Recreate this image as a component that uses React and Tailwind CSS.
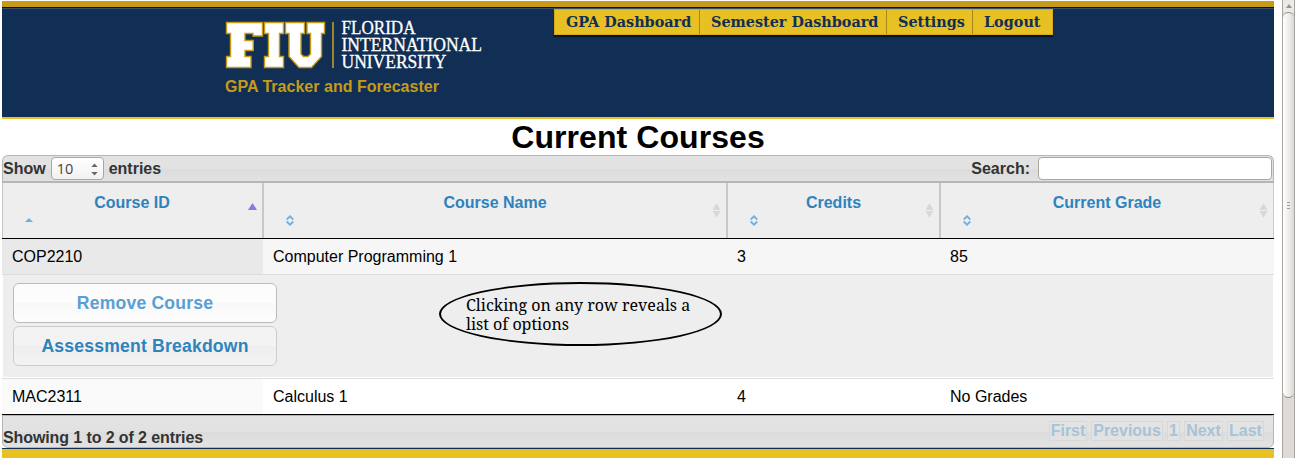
import React from 'react';

function Logo() {
  return (
    <svg className="block h-[50px] w-[262px] overflow-visible" viewBox="0 0 262 50">
      <g fill="#fff" stroke="#c79b18" strokeWidth="1.4">
        <path d="M1.500 1.500H37.500V15H28V12.500H20V19.500H28.200V29.500H20V35.500H26V46.500H1.500V35.500H5.500V12.500H1.500Z" />
        <path d="M39.500 1.500H58.500V12.500H54.500V35.500H58.500V46.500H39.500V35.500H43.500V12.500H39.500Z" />
        <path d="M60.500 1.500H79.500V12.500H76V33L78.500 35.500H83L85.500 33V12.500H82V1.500H99.500V12.500H96.500V35.500L86.500 46.500H74L64 35.500V12.500H60.500Z" />
      </g>
      <path d="M108 1V47" stroke="#c79b18" strokeWidth="1.6" />
      <g fill="#fff" stroke="#fff" strokeWidth="0.300" fontFamily="Liberation Serif, serif" fontSize="18">
        <text x="116.500" y="13" textLength="74" lengthAdjust="spacingAndGlyphs">FLORIDA</text>
        <text x="116.500" y="30" textLength="140.500" lengthAdjust="spacingAndGlyphs">INTERNATIONAL</text>
        <text x="116.500" y="47" textLength="105" lengthAdjust="spacingAndGlyphs">UNIVERSITY</text>
      </g>
    </svg>
  );
}

const navItems = [
  { label: 'GPA Dashboard', width: 'w-[145px]' },
  { label: 'Semester Dashboard', width: 'w-[187px]' },
  { label: 'Settings', width: 'w-[86px]' },
  { label: 'Logout', width: 'w-[81px]' },
];

function Nav() {
  return (
    <nav className="flex h-[26px] w-[499px] border border-[#d9a91c] bg-[#e7c024] font-['DejaVu_Serif',serif] text-[14.4px] leading-[24px] font-bold text-[#112e54] shadow-[0_2px_1px_#07152a]">
      {navItems.map((n, i) => (
        <a key={n.label} className={`${n.width} shrink-0 pl-[11px] whitespace-nowrap ${i < 3 ? 'border-r border-[#a88718]' : ''}`}>
          {n.label}
        </a>
      ))}
    </nav>
  );
}

function SortArrows() {
  return (
    <svg className="block h-[15px] w-[9px]" viewBox="0 0 9 15">
      <path d="M.5 7L4.500 0L8.500 7ZM.5 8L4.500 15L8.500 8Z" fill="#d8d8d8" />
    </svg>
  );
}

function Carets() {
  return (
    <svg className="block h-[11px] w-[8px]" viewBox="0 0 8 11">
      <path d="M.7 4.500L4 1.300L7.300 4.500M.7 6.500L4 9.700L7.300 6.500" fill="none" stroke="#6db1e2" strokeWidth="1.800" />
    </svg>
  );
}

function HeaderCell({ label, sorted, last }) {
  return (
    <div className={`flex h-[55px] justify-between bg-[#eee] ${last ? 'border-r border-[#ccc]' : 'border-r-2 border-[#c8c8c8]'} ${sorted ? 'border-l' : ''}`}>
      <div className={`${sorted ? 'w-[30px] pl-[22px] pt-[31px]' : 'w-[32px] pl-[22.400px] pt-[31.500px]'}`}>
        {sorted ? (
          <svg className="mt-[4px] block h-[4px] w-[8px]" viewBox="0 0 8 4">
            <path d="M0 4L4 0L8 4Z" fill="#6db1e2" />
          </svg>
        ) : (
          <Carets />
        )}
      </div>
      <div className="pt-[11px] leading-[18px] font-bold text-[#2e83bd]">{label}</div>
      <div className={`${sorted ? 'w-[31px]' : 'w-[32px]'} ${sorted ? 'pl-[17px]' : 'pl-[18px]'} pt-[20px]`}>
        {sorted ? (
          <svg className="block h-[7px] w-[9px]" viewBox="0 0 9 7">
            <path d="M0 7L4.500 0L9 7Z" fill="#7f7fdf" />
          </svg>
        ) : (
          <SortArrows />
        )}
      </div>
    </div>
  );
}

function Row({ cells, firstBg, bg }) {
  return (
    <div className={`grid h-[35px] grid-cols-[261px_464px_213px_334px] leading-[35px] text-black ${bg}`}>
      {cells.map((c, i) => (
        <div key={i} className={i === 0 ? `pl-[10px] ${firstBg}` : 'pl-[10px]'}>
          {c}
        </div>
      ))}
    </div>
  );
}

const barBg = 'bg-[linear-gradient(#e3e3e3_0%,#e2e2e2_50%,#dcdcdc_51%,#e2e2e2_100%)]';

function Toolbar() {
  return (
    <div className={`flex h-[28px] items-center justify-between rounded-t-[6px] border border-b-2 border-[#b5b5b5] ${barBg} font-bold text-[#333]`}>
      <div className="flex items-center">
        <span>Show</span>
        <span className="mr-[5px] ml-[5px] flex h-[23px] w-[53px] items-center justify-between rounded-[4px] border border-[#aaa6a0] bg-[linear-gradient(#fff,#f1f1f1)] pr-[5px] pl-[5px] font-['Open_Sans',sans-serif] text-[14.5px] font-normal text-[#444]">
          10
          <svg className="mt-[2px] h-[13px] w-[7px]" viewBox="0 0 7 13">
            <path d="M.3 4L3.500 .5L6.700 4ZM.3 9L3.500 12.500L6.700 9Z" fill="#666" />
          </svg>
        </span>
        <span>entries</span>
      </div>
      <label className="flex items-center gap-[8px]">
        Search:
        <input className="mr-px h-[23px] w-[234px] rounded-[4px] border border-[#aaa6a0] bg-white" />
      </label>
    </div>
  );
}

const pages = [
  ['First', 'w-[38px]'],
  ['Previous', 'w-[72px]'],
  ['1', 'w-[13px]'],
  ['Next', 'w-[39px]'],
  ['Last', 'w-[37px]'],
];

function TableFooter() {
  return (
    <div className={`flex h-[33px] justify-between rounded-b-[6px] border border-[#b5b5b5] ${barBg} font-bold text-[#333]`}>
      <div className="pt-[13px] leading-[18px] tracking-[-0.1px]">Showing 1 to 2 of 2 entries</div>
      <div className="flex gap-[4px] pt-[5px] pr-[9px]">
        {pages.map(([t, w]) => (
          <span key={t} className={`${w} flex h-[20px] items-center justify-center border border-[#d8d8d8] bg-[#e4e4e4]/60 whitespace-nowrap text-[#a6c3d8]`}>
            {t}
          </span>
        ))}
      </div>
    </div>
  );
}

function Scrollbar() {
  return (
    <div className="flex h-[458px] w-[13px] flex-col border-x border-[#aaa49f] bg-[#dedad7]">
      <div className="flex h-[12px] items-center justify-center bg-[#edebe9]">
        <svg className="h-[4px] w-[6px]" viewBox="0 0 6 4">
          <path d="M0 4L3 0L6 4Z" fill="#96918c" />
        </svg>
      </div>
      <div className="flex h-[386px] flex-col items-center justify-center gap-[2px] rounded-[6px] border-y border-[#918c88] bg-[linear-gradient(to_right,#fff,#eeecea_55%,#dcd8d5)]">
        <i className="block h-px w-[3px] bg-[#a19d99]" />
        <i className="block h-px w-[3px] bg-[#a19d99]" />
        <i className="block h-px w-[3px] bg-[#a19d99]" />
      </div>
    </div>
  );
}

export default function App() {
  return (
    <div className="flex h-[458px] w-[1295px] justify-between overflow-hidden bg-white pl-[2px] font-['Liberation_Sans',Arial,sans-serif] text-[16px]">
      <main className="w-[1272px] pt-px">
        <div className="h-[6px] bg-[#c79b18]" />
        <header className="flex h-[112px] border-t border-b-2 border-t-[#07111f] border-b-[#e7c024] bg-[#112e54] shadow-[inset_0_1px_0_#35506f]">
          <div className="w-[552px] pt-[13px] pl-[223px]">
            <Logo />
            <div className="mt-[7px] leading-[18px] font-bold tracking-[0.02px] text-[#c79b18]">GPA Tracker and Forecaster</div>
          </div>
          <div className="pt-px">
            <Nav />
          </div>
        </header>
        <h1 className="h-[36px] text-center text-[32px] leading-[37px] font-bold tracking-[0.07px] text-black">Current Courses</h1>
        <Toolbar />
        <div className="grid grid-cols-[262px_464px_213px_333px] border-b border-black">
          <HeaderCell label="Course ID" sorted />
          <HeaderCell label="Course Name" />
          <HeaderCell label="Credits" />
          <HeaderCell label="Current Grade" last />
        </div>
        <Row cells={['COP2210', 'Computer Programming 1', '3', '85']} firstBg="bg-[#e9e9e9]" bg="bg-[#f6f6f6]" />
        <div className="border-t border-b border-[#ddd]">
          <div className="mx-px flex h-[103px] border-b border-white bg-[#eee] pt-[8px] pl-[10px]">
            <div className="flex w-[264px] flex-col gap-[3px] text-[17.6px] font-bold tracking-[0.19px]">
              <button className="h-[40px] rounded-[6px] border border-[#bbb] bg-[linear-gradient(#fcfcfc_50%,#f8f8f8_51%,#fdfdfd)] text-[#5a9fd2]">Remove Course</button>
              <button className="h-[40px] rounded-[6px] border border-[#ccc] bg-[linear-gradient(#f3f3f3_50%,#eee_51%,#f3f3f3)] text-[#2e83bd]">Assessment Breakdown</button>
            </div>
            <div className="mt-[-1px] ml-[162px] h-[64px] w-[283px] rounded-[50%] border-2 border-black pt-[12px] pl-[25px] font-['Noto_Serif','Droid_Serif',serif] text-[16px] leading-[19px] whitespace-nowrap text-black">
              Clicking on any row reveals a
              <br />
              list of options
            </div>
          </div>
        </div>
        <Row cells={['MAC2311', 'Calculus 1', '4', 'No Grades']} firstBg="bg-[#fafafa]" bg="bg-white" />
        <div className="h-px bg-black" />
        <TableFooter />
        <div className="h-[10px] border-t border-[#112e54] bg-[#e7c024]" />
      </main>
      <Scrollbar />
    </div>
  );
}
